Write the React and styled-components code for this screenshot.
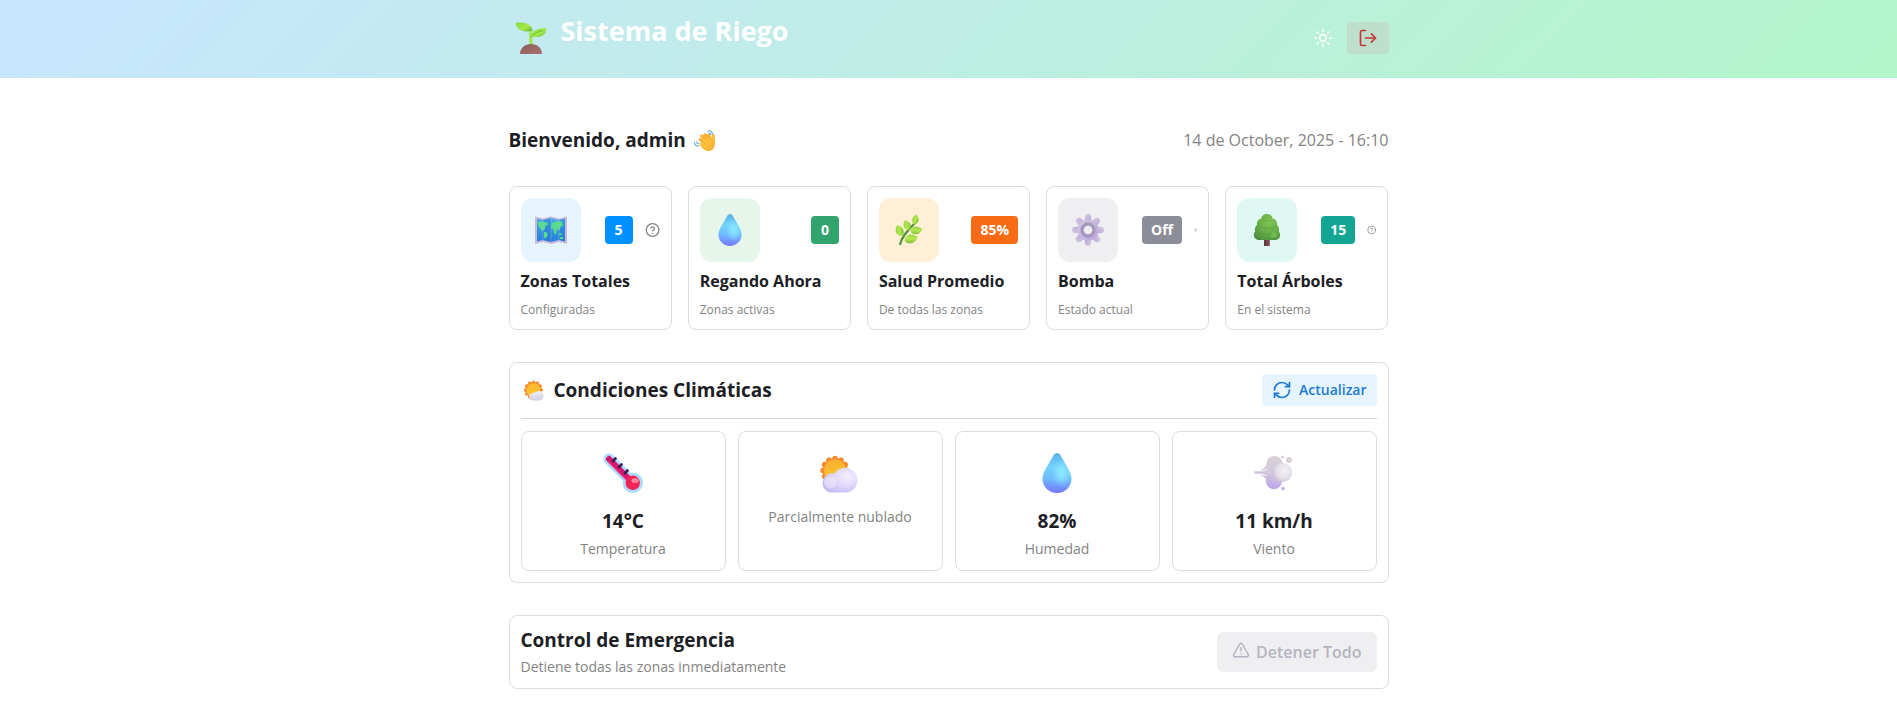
import React from "react";
import styled, { createGlobalStyle } from "styled-components";
import { Sun, LogOut, RefreshCw, TriangleAlert, CircleQuestionMark } from "lucide-react";

const GlobalStyle = createGlobalStyle`
  *, *::before, *::after { box-sizing: border-box; }
  body {
    margin: 0;
    background: #fff;
    color: #1c2024;
    font-family: "Open Sans", "Noto Sans", sans-serif;
    font-size: 16px;
    line-height: 24px;
  }
  h1, h2, h3, p { margin: 0; }
  button { font-family: inherit; border: 0; cursor: pointer; }
`;

const Header = styled.header`
  background: linear-gradient(135deg, #c9e5ff 0%, #b2f6c9 100%);
  padding: 15px 24px 17px;
`;

const Container = styled.div`
  width: 100%;
  max-width: 880px;
  margin: 0 auto;
`;

const HeaderBar = styled(Container)`
  display: flex;
  align-items: center;
  justify-content: space-between;
  height: 46px;
`;

const Brand = styled.div`
  display: flex;
  align-items: center;
  gap: 8px;
`;

const BrandTitle = styled.h1`
  font-size: 27px;
  line-height: 36px;
  font-weight: 700;
  color: #fff;
  padding-bottom: 14px;
`;

const HeaderActions = styled.div`
  display: flex;
  align-items: center;
  gap: 14px;
`;

const ThemeButton = styled.button`
  display: flex;
  padding: 0;
  background: none;
  color: #fff;
`;

const LogoutButton = styled.button`
  display: flex;
  align-items: center;
  justify-content: center;
  width: 42px;
  height: 32px;
  padding: 0;
  border-radius: 4px;
  background: #bedfcb;
  color: #c4373b;
`;

const Main = styled.main`
  padding: 48px 24px 8px;
`;

const Sections = styled(Container)`
  display: flex;
  flex-direction: column;
  gap: 32px;
`;

const Row = styled.div`
  display: flex;
  align-items: center;
  justify-content: space-between;
`;

const Heading = styled.h2`
  display: flex;
  align-items: center;
  gap: ${(p) => p.$gap || 0}px;
  font-size: 19px;
  line-height: 28px;
  font-weight: 700;
`;

const EmojiSlot = styled.span`
  display: flex;
  justify-content: center;
  width: ${(p) => p.$width}px;
`;

const DateText = styled.time`
  color: #838383;
`;

const Card = styled.section`
  min-width: 0;
  padding: 11px;
  border: 1px solid #dcdce2;
  border-radius: 8px;
  background: #fff;
`;

const StatGrid = styled.div`
  display: grid;
  grid-template-columns: repeat(5, minmax(0, 1fr));
  gap: 16px;
`;

const StatTop = styled.div`
  display: flex;
  align-items: center;
  justify-content: space-between;
  gap: 24px;
`;

const IconTile = styled.div`
  display: flex;
  flex: none;
  align-items: center;
  justify-content: center;
  width: 60px;
  height: 64px;
  border-radius: 12px;
  background: ${(p) => p.$tint};
`;

const BadgeGroup = styled.div`
  display: flex;
  align-items: center;
  gap: 12px;
  min-width: 0;
  color: #838383;

  svg { min-width: 0; flex-shrink: 1; }
`;

const Badge = styled.span`
  flex: none;
  min-width: 28px;
  padding: 4px 9px;
  border-radius: 4px;
  background: ${(p) => p.$color};
  color: #fff;
  font-size: 14px;
  line-height: 20px;
  font-weight: 700;
  text-align: center;
`;

const StatTitle = styled.h3`
  margin-top: 7px;
  font-size: 16px;
  line-height: 24px;
  font-weight: 700;
  white-space: nowrap;
`;

const Caption = styled.p`
  margin-top: ${(p) => p.$gap || 0}px;
  color: #838383;
  font-size: ${(p) => (p.$small ? 12 : 14)}px;
  line-height: ${(p) => (p.$small ? 16 : 20)}px;
`;

const SoftButton = styled.button`
  display: flex;
  align-items: center;
  gap: 7px;
  height: 32px;
  padding: 0 10px;
  border-radius: 4px;
  background: #e6f4fe;
  color: #1a7bd0;
  font-size: 14px;
  line-height: 20px;
  font-weight: 600;
`;

const Divider = styled.hr`
  height: 1px;
  margin: 12px 0;
  border: 0;
  background: #d5d5dd;
`;

const WeatherGrid = styled.div`
  display: grid;
  grid-template-columns: repeat(4, minmax(0, 1fr));
  gap: 12px;
`;

const WeatherCard = styled(Card)`
  display: flex;
  flex-direction: column;
  align-items: center;
  gap: 4px;
`;

const WeatherIcon = styled.div`
  display: flex;
  align-items: center;
  height: 60px;
`;

const WeatherValue = styled.p`
  font-size: 19px;
  line-height: 28px;
  font-weight: 700;
`;

const EmergencyTitle = styled(Heading)`
  line-height: 26px;
`;

const StopButton = styled.button`
  display: flex;
  align-items: center;
  gap: 6px;
  height: 40px;
  padding: 0 15px;
  border-radius: 6px;
  background: #efeff1;
  color: #b4b4c1;
  font-size: 16px;
  line-height: 24px;
  font-weight: 600;
  cursor: default;

  svg { margin-bottom: 4px; }
`;

const Svg = styled.svg`
  display: block;
  flex: none;
`;

function Sprout({ size }) {
  return (
    <Svg width={size} height={size} viewBox="0 0 32 32" aria-hidden="true">
      <defs>
        <linearGradient id="leafA" x1="0" y1="0" x2="1" y2="1">
          <stop offset="0" stopColor="#7bd93c" />
          <stop offset=".55" stopColor="#a6ea4c" />
          <stop offset="1" stopColor="#62b13a" />
        </linearGradient>
        <linearGradient id="soil" x1="0" y1="0" x2="1" y2="1">
          <stop offset="0" stopColor="#8b5f57" />
          <stop offset="1" stopColor="#a9706f" />
        </linearGradient>
      </defs>
      <path d="M14.2 9h3.4v14h-3.4z" fill="#a5e552" />
      <path d="M.6 1C8-.3 16 .8 17.600 8.800 8.600 10.600 1.600 8.600.600 1z" fill="url(#leafA)" />
      <path d="M31.600 6.400c-6-1-14 1-15.600 8.200 8 1.600 15-.6 15.600-8.200z" fill="url(#leafA)" />
      <path d="M15.500 15.200c4-4 8-5.600 13-6.600" stroke="#5fae36" strokeWidth=".8" fill="none" />
      <path d="M5 32c0-6 5-10 11-10s11 4 11 10z" fill="url(#soil)" />
    </Svg>
  );
}

function Wave({ size }) {
  return (
    <Svg width={size} height={size} viewBox="0 0 32 32" aria-hidden="true">
      <defs>
        <linearGradient id="hand" x1="0" y1="0" x2="1" y2="1">
          <stop offset="0" stopColor="#ffd13b" />
          <stop offset="1" stopColor="#fbab3a" />
        </linearGradient>
      </defs>
      <g stroke="#f9b238" strokeWidth="5" strokeLinecap="round">
        <path d="M18 20 9.500 14.500M19 17 12 9M22 15l-5-7.500M25 15l-2.500-7" />
      </g>
      <path d="M13 14l9-4 4 3 2-6c.6-2 3.600-1.600 3.700.8L32 19c0 8-3.500 13-10 13-4 0-7-1.500-9.500-4.500L8.500 22c-1-2 1-4 3-3l3 1.500z" fill="url(#hand)" />
      <path d="M11 16l6 4M14 10l5 6M18.500 9l4 5.500" stroke="#e69526" strokeWidth=".9" fill="none" />
      <g stroke="#4c9ad8" strokeWidth="1.600" fill="none" strokeLinecap="round">
        <path d="M21 2c3-2 7 0 7 4M23 5c1.500-.5 2.500.5 2.500 2M1 19c-.5 4 3 6 6 5M4 18c0 2 1.500 3 3 3" />
      </g>
    </Svg>
  );
}

function WorldMap({ size }) {
  return (
    <Svg width={size} height={size} viewBox="0 0 32 32" aria-hidden="true">
      <defs>
        <linearGradient id="sea" x1="0" y1="0" x2="0" y2="1">
          <stop offset="0" stopColor="#48aee8" />
          <stop offset="1" stopColor="#237fd8" />
        </linearGradient>
      </defs>
      <path d="M0 2.500 8 4.500l8-2 8 2 8-2V30l-8-2-8 2-8-2-8 2z" fill="#c9b9dd" />
      <path d="M2 4.500 8 6l8-2 8 2 6-1.500v23L24 26l-8 2-8-2-6 1.500z" fill="url(#sea)" />
      <path d="M8 6l8-2v24l-8-2zM24 6l6-1.500v23L24 26z" fill="#1c6fce" opacity=".35" />
      <g fill="#56dd8c">
        <path d="M3 8l4-.5 5 1 1.500 2-3 1.500-1 3.500-2.500 1.500L5 14l-2-3z" />
        <path d="M9 17.500l3.500 1.500v2.500L10.500 25 9 23z" />
        <path d="M17 9l5-2 5 .5 1 4-2.500 1.500-1 3.500-2.500-1.500-.5 4-2 2-1-5.500-2.500-2z" />
        <path d="M24 19.500h3V21h-3zM25 23h3v2h-3z" />
      </g>
      <path d="M8 4.500V28M16 2.500V30M24 4.500V28" stroke="#b5b8e6" strokeWidth=".4" />
    </Svg>
  );
}

function Drop({ size, id }) {
  const shape =
    "M16 0c1.200 0 2.200.700 3 2.200C21.600 7.400 27.600 15 27.600 20.600 27.600 27 22.500 32 16 32S4.400 27 4.400 20.600C4.400 15 10.400 7.400 13 2.200 13.800.700 14.800 0 16 0z";
  return (
    <Svg width={size} height={size} viewBox="0 0 32 32" aria-hidden="true">
      <defs>
        <linearGradient id={id} x1=".5" y1="0" x2=".45" y2="1">
          <stop offset="0" stopColor="#5bb0e8" />
          <stop offset=".35" stopColor="#73d2fc" />
          <stop offset=".65" stopColor="#6fbcff" />
          <stop offset="1" stopColor="#7476ff" />
        </linearGradient>
        <radialGradient id={`${id}Glow`} cx=".66" cy=".5" r=".35">
          <stop offset="0" stopColor="#8eeaff" />
          <stop offset="1" stopColor="#8eeaff" stopOpacity="0" />
        </radialGradient>
      </defs>
      <path d={shape} fill={`url(#${id})`} />
      <path d={shape} fill={`url(#${id}Glow)`} />
    </Svg>
  );
}

function Herb({ size }) {
  const leaf = "M0 0C-5-2-5.500-8 0-12 5-8 5-2 0 0z";
  return (
    <Svg width={size} height={size} viewBox="0 0 32 32" aria-hidden="true">
      <defs>
        <linearGradient id="herb" x1="0" y1="0" x2="1" y2=".4">
          <stop offset="0" stopColor="#8ccc3d" />
          <stop offset=".6" stopColor="#b4e94f" />
          <stop offset="1" stopColor="#88c63c" />
        </linearGradient>
      </defs>
      <path d="M7 31c1-7 6-13 15-22" stroke="#55933f" strokeWidth="2.200" fill="none" />
      <g fill="url(#herb)">
        <path d={leaf} transform="translate(21.500 10.500) rotate(12) scale(.85)" />
        <path d={leaf} transform="translate(16 16) rotate(-22) scale(.9)" />
        <path d={leaf} transform="translate(9 22) rotate(-24)" />
        <path d={leaf} transform="translate(17.500 17.500) rotate(80)" />
        <path d={leaf} transform="translate(11.500 26.500) rotate(76) scale(1.150)" />
      </g>
    </Svg>
  );
}

function Gear({ size }) {
  return (
    <Svg width={size} height={size} viewBox="0 0 32 32" aria-hidden="true">
      <defs>
        <linearGradient id="gear" x1="0" y1="0" x2="1" y2="1">
          <stop offset="0" stopColor="#d5cddf" />
          <stop offset="1" stopColor="#b9a2dc" />
        </linearGradient>
        <linearGradient id="gearRing" x1="1" y1="0" x2="0" y2="1">
          <stop offset="0" stopColor="#a99eb4" />
          <stop offset="1" stopColor="#a592c4" />
        </linearGradient>
      </defs>
      <g fill="url(#gear)">
        {[0, 45, 90, 135, 180, 225, 270, 315].map((a) => (
          <path key={a} d="M12.300 9l.7-6.500c.3-3.300 5.700-3.300 6 0l.7 6.500z" transform={`rotate(${a} 16 16)`} />
        ))}
        <circle cx="16" cy="16" r="10.500" />
      </g>
      <circle cx="16" cy="16" r="6" fill="#efeff1" stroke="url(#gearRing)" strokeWidth="3.400" />
    </Svg>
  );
}

function Tree({ size }) {
  return (
    <Svg width={size} height={size} viewBox="0 0 32 32" aria-hidden="true">
      <defs>
        <radialGradient id="tree" cx=".6" cy=".3" r=".8">
          <stop offset="0" stopColor="#80c653" />
          <stop offset=".6" stopColor="#63ab46" />
          <stop offset="1" stopColor="#4c8c40" />
        </radialGradient>
      </defs>
      <path d="M13.200 23h5.600v9h-5.600z" fill="#7c4a4c" />
      <path d="M13.200 23h2v9h-2z" fill="#5f3438" />
      <path d="M16 0c3 0 5.500 2 5.700 4.600C25 5.500 26.500 8 26 11c2 1.500 2.500 4 1.800 6.500C30.500 20.500 29 26 24 26H8c-5 0-6.500-5.500-3.800-8.500C3.500 15 4 12.500 6 11c-.5-3 1-5.500 4.300-6.400C10.500 2 13 0 16 0z" fill="url(#tree)" />
      <path d="M7 12.500c5 2.500 13 2.500 18 0M6 18.500c6 2 14 2 20 0M11.500 6c3 1.500 6 1.500 9 0" stroke="#458640" strokeWidth=".7" fill="none" opacity=".5" />
      <circle cx="23" cy="21" r="3" fill="#8ad058" opacity=".5" />
    </Svg>
  );
}

function Thermometer({ size }) {
  return (
    <Svg width={size} height={size} viewBox="0 0 40 40" aria-hidden="true">
      <path d="M6 6 29.500 29.500" stroke="#aadcff" strokeWidth="11" strokeLinecap="round" />
      <circle cx="29.800" cy="29.800" r="10.200" fill="#aadcff" />
      <path d="M6 6 28 28" stroke="#d3176f" strokeWidth="6" strokeLinecap="round" />
      <path d="M5 8.500 25 28.500" stroke="#ee3a8e" strokeWidth="1.200" />
      <circle cx="29.800" cy="29.800" r="7.200" fill="#f42257" />
      <ellipse cx="32" cy="27.500" rx="3.600" ry="2.600" fill="#ff8298" />
      <path d="M10 8l2.500-2.500M16 14l2.500-2.500M22 20l2.500-2.500" stroke="#35204f" strokeWidth="2.600" strokeLinecap="round" />
    </Svg>
  );
}

const sunRays = [0, 30, 60, 90, 120, 150, 180, 210, 240, 270, 300, 330];

function SunCloud({ size }) {
  return (
    <Svg width={size} height={size} viewBox="0 0 40 40" aria-hidden="true">
      <defs>
        <linearGradient id="cloudySun" x1=".3" y1="0" x2=".6" y2="1">
          <stop offset="0" stopColor="#f6ae2f" />
          <stop offset="1" stopColor="#fdcb32" />
        </linearGradient>
        <radialGradient id="cloudyCloud" cx=".7" cy=".35" r=".75">
          <stop offset="0" stopColor="#f3effd" />
          <stop offset=".55" stopColor="#ded6fb" />
          <stop offset="1" stopColor="#c6bcf6" />
        </radialGradient>
      </defs>
      <g fill="#f68a2e">
        {sunRays.map((a) => (
          <circle key={a} cx="15" cy="5.600" r="2.800" transform={`rotate(${a} 15 17.500)`} />
        ))}
        <circle cx="15" cy="17.500" r="12.500" />
      </g>
      <circle cx="15" cy="17.500" r="11" fill="url(#cloudySun)" />
      <path d="M10 39.500A9.300 9.300 0 1 1 14.500 20.500a12.500 12.500 0 1 1 13 19z" fill="url(#cloudyCloud)" />
      <circle cx="10" cy="29.500" r="6" fill="#f3edfc" opacity=".5" />
    </Svg>
  );
}

function SunSmallCloud({ size }) {
  return (
    <Svg width={size} height={size} viewBox="0 0 40 40" aria-hidden="true">
      <defs>
        <linearGradient id="mostlySun" x1=".2" y1="0" x2=".7" y2="1">
          <stop offset="0" stopColor="#f9b52f" />
          <stop offset="1" stopColor="#fdc832" />
        </linearGradient>
        <linearGradient id="mostlyCloud" x1="0" y1="0" x2="0" y2="1">
          <stop offset="0" stopColor="#f1f0f3" />
          <stop offset="1" stopColor="#d3cde2" />
        </linearGradient>
      </defs>
      <g fill="#f68b33">
        {sunRays.map((a) => (
          <circle key={a} cx="18" cy="4" r="3.200" transform={`rotate(${a} 18 19)`} />
        ))}
        <circle cx="18" cy="19" r="15.500" />
      </g>
      <circle cx="18" cy="19" r="13.500" fill="url(#mostlySun)" />
      <path d="M17 39a7 7 0 0 1-.5-14 6 6 0 0 1 5.500-1.500 9.200 9.200 0 1 1 9 15.500z" fill="url(#mostlyCloud)" />
    </Svg>
  );
}

function Gust({ size }) {
  return (
    <Svg width={size} height={size} viewBox="0 0 40 40" aria-hidden="true">
      <defs>
        <linearGradient id="gust" gradientUnits="userSpaceOnUse" x1="22" y1="3" x2="18" y2="37">
          <stop offset="0" stopColor="#d9d1d6" />
          <stop offset=".5" stopColor="#d2c8dc" />
          <stop offset="1" stopColor="#baa2ee" />
        </linearGradient>
        <radialGradient id="puff" cx=".6" cy=".4" r=".65">
          <stop offset="0" stopColor="#f3eff4" />
          <stop offset=".6" stopColor="#e6e0ea" />
          <stop offset="1" stopColor="#cdc2da" />
        </radialGradient>
      </defs>
      <g fill="url(#gust)">
        <path d="M.5 18.200h11v2.600H.500z" />
        <path d="M5 17.200c5-.7 7-4.200 9-8.200l12 6v12l-11 4c-1.500-4-4.500-7.500-9-9l5-1v-3z" />
        <circle cx="20.500" cy="11" r="8" />
        <circle cx="20" cy="28" r="8.200" />
        <circle cx="35" cy="7" r="3" />
        <circle cx="28.500" cy="4" r="1.600" />
        <circle cx="29" cy="35.500" r="1.700" />
      </g>
      <circle cx="28.500" cy="19.500" r="9.600" fill="url(#puff)" />
      <path d="M5 17.800l8-1.200M5 21.400l8 1.200" stroke="#fff" strokeWidth=".7" />
    </Svg>
  );
}

const stats = [
  { title: "Zonas Totales", note: "Configuradas", value: "5", color: "#0090ff", tint: "#e6f4fe", icon: <WorldMap size={32} />, help: true },
  { title: "Regando Ahora", note: "Zonas activas", value: "0", color: "#30a46c", tint: "#e6f6eb", icon: <Drop size={32} id="dropStat" /> },
  { title: "Salud Promedio", note: "De todas las zonas", value: "85%", color: "#f76b15", tint: "#ffefd6", icon: <Herb size={32} /> },
  { title: "Bomba", note: "Estado actual", value: "Off", color: "#8b8d98", tint: "#efeff1", icon: <Gear size={32} />, help: true },
  { title: "Total Árboles", note: "En el sistema", value: "15", color: "#12a594", tint: "#e0f8f3", icon: <Tree size={32} />, help: true },
];

const weather = [
  { value: "14°C", label: "Temperatura", icon: <Thermometer size={40} /> },
  { label: "Parcialmente nublado", icon: <SunCloud size={40} /> },
  { value: "82%", label: "Humedad", icon: <Drop size={40} id="dropHumidity" /> },
  { value: "11 km/h", label: "Viento", icon: <Gust size={40} /> },
];

export default function App() {
  return (
    <>
      <GlobalStyle />
      <Header>
        <HeaderBar>
          <Brand>
            <EmojiSlot $width={44}>
              <Sprout size={32} />
            </EmojiSlot>
            <BrandTitle>Sistema de Riego</BrandTitle>
          </Brand>
          <HeaderActions>
            <ThemeButton type="button" aria-label="Cambiar tema">
              <Sun size={20} />
            </ThemeButton>
            <LogoutButton type="button" aria-label="Cerrar sesión">
              <LogOut size={20} />
            </LogoutButton>
          </HeaderActions>
        </HeaderBar>
      </Header>
      <Main>
        <Sections>
          <Row>
            <Heading $gap={8}>
              Bienvenido, admin <Wave size={21} />
            </Heading>
            <DateText dateTime="2025-10-14T16:10">14 de October, 2025 - 16:10</DateText>
          </Row>
          <StatGrid>
            {stats.map((s) => (
              <Card key={s.title}>
                <StatTop>
                  <IconTile $tint={s.tint}>{s.icon}</IconTile>
                  <BadgeGroup>
                    <Badge $color={s.color}>{s.value}</Badge>
                    {s.help && <CircleQuestionMark size={16} />}
                  </BadgeGroup>
                </StatTop>
                <StatTitle>{s.title}</StatTitle>
                <Caption $small $gap={9}>{s.note}</Caption>
              </Card>
            ))}
          </StatGrid>
          <Card>
            <Row>
              <Heading $gap={6}>
                <EmojiSlot $width={27}>
                  <SunSmallCloud size={21} />
                </EmojiSlot>
                Condiciones Climáticas
              </Heading>
              <SoftButton type="button">
                <RefreshCw size={20} />
                Actualizar
              </SoftButton>
            </Row>
            <Divider />
            <WeatherGrid>
              {weather.map((w) => (
                <WeatherCard as="div" key={w.label}>
                  <WeatherIcon>{w.icon}</WeatherIcon>
                  {w.value && <WeatherValue>{w.value}</WeatherValue>}
                  <Caption>{w.label}</Caption>
                </WeatherCard>
              ))}
            </WeatherGrid>
          </Card>
          <Card>
            <Row>
              <div>
                <EmergencyTitle>Control de Emergencia</EmergencyTitle>
                <Caption $gap={4}>Detiene todas las zonas inmediatamente</Caption>
              </div>
              <StopButton type="button" disabled>
                <TriangleAlert size={18} />
                Detener Todo
              </StopButton>
            </Row>
          </Card>
        </Sections>
      </Main>
    </>
  );
}
